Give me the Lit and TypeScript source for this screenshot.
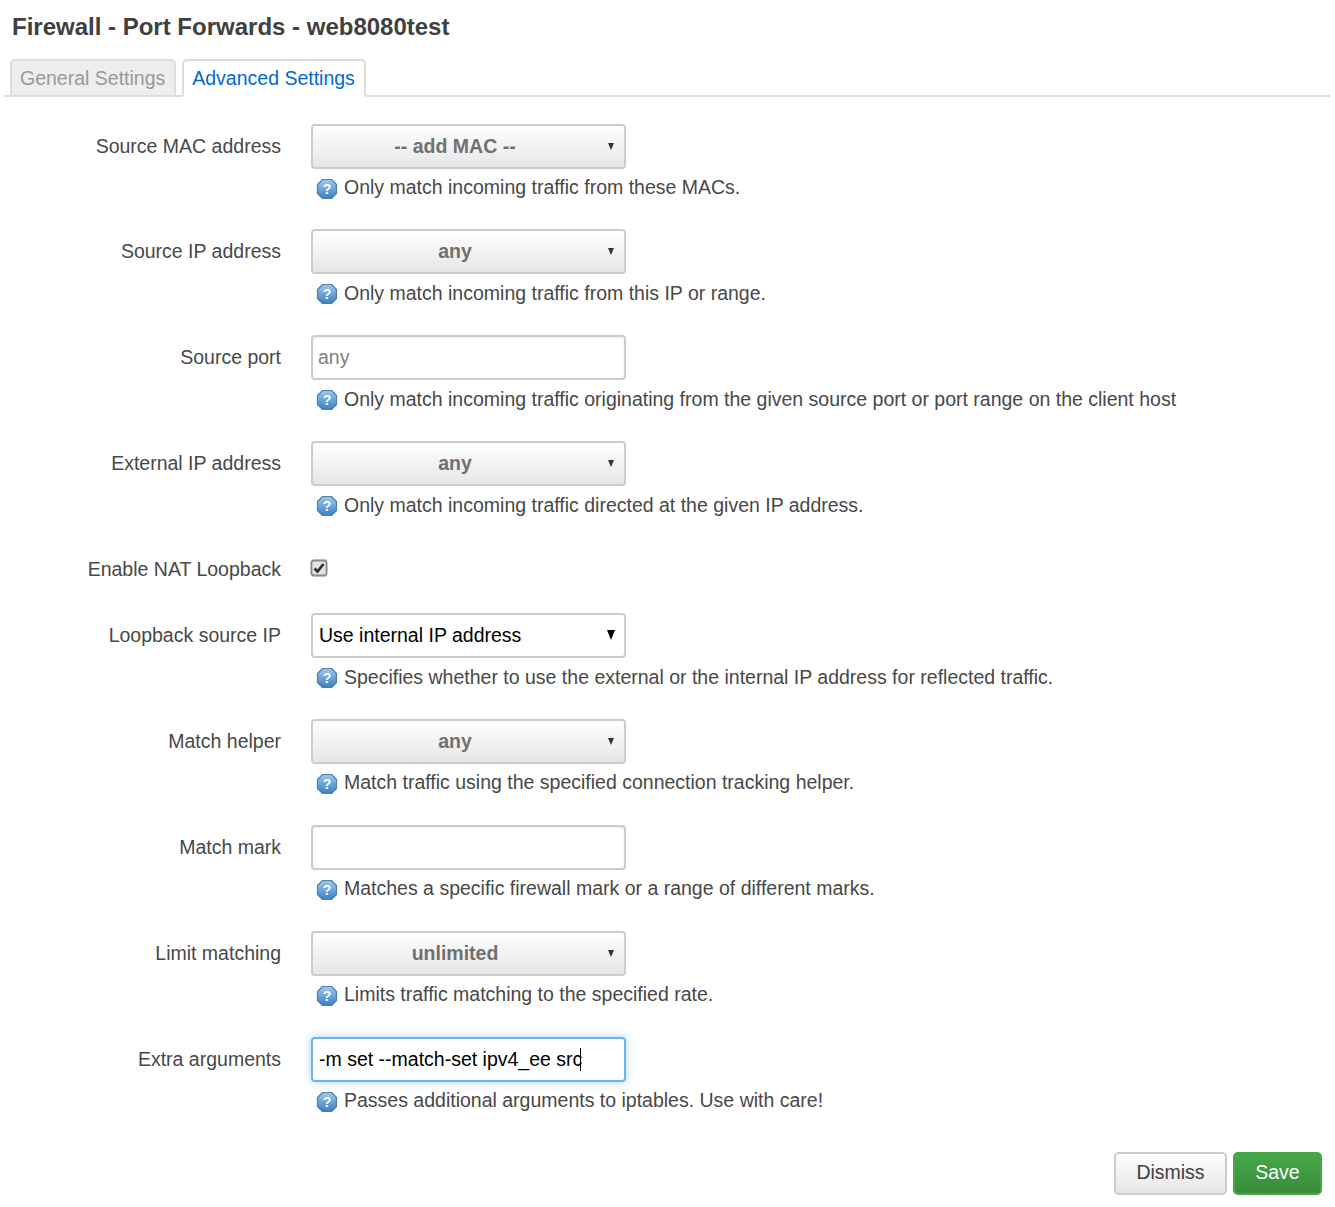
import { LitElement, html, css, nothing } from 'lit';
import { customElement } from 'lit/decorators.js';

type Row = {
  label: string;
  kind: 'drop' | 'text' | 'check' | 'plain' | 'focus';
  value?: string;
  placeholder?: boolean;
  hint?: string;
};

const rows: Row[] = [
  { label: 'Source MAC address', kind: 'drop', value: '-- add MAC --', hint: 'Only match incoming traffic from these MACs.' },
  { label: 'Source IP address', kind: 'drop', value: 'any', hint: 'Only match incoming traffic from this IP or range.' },
  { label: 'Source port', kind: 'text', value: 'any', placeholder: true, hint: 'Only match incoming traffic originating from the given source port or port range on the client host' },
  { label: 'External IP address', kind: 'drop', value: 'any', hint: 'Only match incoming traffic directed at the given IP address.' },
  { label: 'Enable NAT Loopback', kind: 'check' },
  { label: 'Loopback source IP', kind: 'plain', value: 'Use internal IP address', hint: 'Specifies whether to use the external or the internal IP address for reflected traffic.' },
  { label: 'Match helper', kind: 'drop', value: 'any', hint: 'Match traffic using the specified connection tracking helper.' },
  { label: 'Match mark', kind: 'text', value: '', hint: 'Matches a specific firewall mark or a range of different marks.' },
  { label: 'Limit matching', kind: 'drop', value: 'unlimited', hint: 'Limits traffic matching to the specified rate.' },
  { label: 'Extra arguments', kind: 'focus', value: '-m set --match-set ipv4_ee src', hint: 'Passes additional arguments to iptables. Use with care!' },
];

@customElement('app-root')
export class AppRoot extends LitElement {
  static styles = css`
    :host {
      display: block;
      height: 1207px;
      overflow: hidden;
      background: #fff;
      color: #484848;
      font-family: 'Liberation Sans', Arial, sans-serif;
      font-size: 19.5px;
    }

    h2 {
      margin: 0;
      padding: 13px 12px 0;
      font-size: 24px;
      line-height: 28px;
      font-weight: bold;
      color: #404040;
    }

    .tabs {
      display: flex;
      gap: 6px;
      margin: 18px 5px 0 4px;
      padding-left: 6px;
      height: 36px;
      border-bottom: 2px solid #ddd;
    }

    .tab {
      box-sizing: border-box;
      height: 38px;
      padding: 0 9px 0 8px;
      border: 2px solid #ddd;
      border-radius: 5px 5px 0 0;
      line-height: 34px;
      background: #eee;
      color: #999;
    }

    .tab.active {
      background: #fff;
      color: #0069d6;
      border-bottom-color: #fff;
    }

    .form {
      padding-top: 26.5px;
    }

    .row {
      display: grid;
      grid-template-columns: 281px 1fr;
      column-gap: 30px;
      height: 105.9px;
      align-content: start;
    }

    .row.check {
      height: 66px;
    }

    .label {
      text-align: right;
      line-height: 45px;
    }

    .field {
      position: relative;
      box-sizing: border-box;
      width: 315px;
      height: 45px;
      border: 2px solid #ccc;
      border-radius: 4px;
      background: #fff;
      line-height: 41px;
      padding: 0 6px;
      color: #000;
      white-space: nowrap;
    }

    .field.text {
      box-shadow: inset 0 1px 2px rgba(0, 0, 0, 0.08);
    }

    .field.placeholder {
      padding: 0 5px;
      color: #808080;
    }

    .field.drop {
      background: linear-gradient(#fff, #e6e6e6);
      color: #707070;
      font-weight: bold;
      text-align: center;
      padding: 0 27px 0 0;
    }

    .field.focus {
      border-color: #6cb4ee;
      box-shadow: 0 0 8px rgba(82, 168, 236, 0.5);
    }

    .cursor {
      display: inline-block;
      width: 1px;
      height: 23px;
      margin-left: -2px;
      background: #000;
      vertical-align: -5px;
    }

    .arrow {
      position: absolute;
      top: 17px;
      right: 10px;
      width: 0;
      height: 0;
      border-left: 3.5px solid transparent;
      border-right: 3.5px solid transparent;
      border-top: 7px solid #333;
    }

    .arrow.big {
      top: 15px;
      right: 9px;
      border-left-width: 4.5px;
      border-right-width: 4.5px;
      border-top: 10px solid #000;
    }

    .hint {
      grid-column: 2;
      display: flex;
      align-items: center;
      gap: 6px;
      height: 24px;
      margin-top: 7px;
      padding-left: 5px;
      white-space: nowrap;
    }

    .hint svg {
      flex: none;
      margin-top: 2px;
    }

    .hint text {
      font-family: 'Liberation Sans', Arial, sans-serif;
      font-size: 14px;
      font-weight: bold;
      fill: #fff;
    }

    .checkbox {
      display: block;
      width: 18px;
      height: 18px;
      margin: 12px 0 0 -1px;
    }

    .actions {
      display: flex;
      justify-content: flex-end;
      gap: 6px;
      padding: 0 13px 0 0;
      margin-top: 9px;
    }

    .btn {
      box-sizing: border-box;
      height: 43px;
      border-radius: 5px;
      line-height: 37px;
      text-align: center;
    }

    .btn.dismiss {
      width: 113px;
      border: 2px solid #ccc;
      background: linear-gradient(#fff, #e6e6e6);
      color: #404040;
    }

    .btn.save {
      width: 89px;
      border: 2px solid #45a845;
      background: linear-gradient(#46a946, #3b8a3f);
      color: #fff;
    }
  `;

  renderHelpIcon() {
    return html`
      <svg width="22" height="22" viewBox="0 0 22 22">
        <defs>
          <linearGradient id="help" x1="0" y1="0" x2="0" y2="1">
            <stop offset="0" stop-color="#9ccbf0"></stop>
            <stop offset="1" stop-color="#3b80c2"></stop>
          </linearGradient>
        </defs>
        <path d="M6.5 1.5H15.5L20.5 6.5V15.5L15.5 20.5H6.5L1.5 15.5V6.5Z" fill="url(#help)" stroke="#4f7fa8" stroke-width="1.2" stroke-linejoin="round"></path>
        <text x="11" y="16" text-anchor="middle">?</text>
      </svg>
    `;
  }

  renderCheckbox() {
    return html`
      <svg class="checkbox" viewBox="0 0 18 18">
        <rect width="18" height="18" fill="#f0f0f0"></rect>
        <rect x="1.5" y="1.5" width="15" height="15" rx="2.5" fill="#e4e4e4" stroke="#8a8a8a" stroke-width="1.8"></rect>
        <path d="M4.5 9.5L7.5 12.5L13.5 5" fill="none" stroke="#333" stroke-width="2.8"></path>
      </svg>
    `;
  }

  renderControl(row: Row) {
    switch (row.kind) {
      case 'check':
        return this.renderCheckbox();
      case 'drop':
        return html`<div class="field drop">${row.value}<span class="arrow"></span></div>`;
      case 'plain':
        return html`<div class="field">${row.value}<span class="arrow big"></span></div>`;
      case 'focus':
        return html`<div class="field focus">${row.value}<span class="cursor"></span></div>`;
      default:
        return html`<div class="field text ${row.placeholder ? 'placeholder' : ''}">${row.value}</div>`;
    }
  }

  render() {
    return html`
      <h2>Firewall - Port Forwards - web8080test</h2>
      <div class="tabs">
        <div class="tab">General Settings</div>
        <div class="tab active">Advanced Settings</div>
      </div>
      <div class="form">
        ${rows.map(
          (row) => html`
            <div class="row ${row.kind === 'check' ? 'check' : ''}">
              <div class="label">${row.label}</div>
              <div>${this.renderControl(row)}</div>
              ${row.hint
                ? html`<div class="hint">${this.renderHelpIcon()}<span>${row.hint}</span></div>`
                : nothing}
            </div>
          `,
        )}
      </div>
      <div class="actions">
        <div class="btn dismiss">Dismiss</div>
        <div class="btn save">Save</div>
      </div>
    `;
  }
}
